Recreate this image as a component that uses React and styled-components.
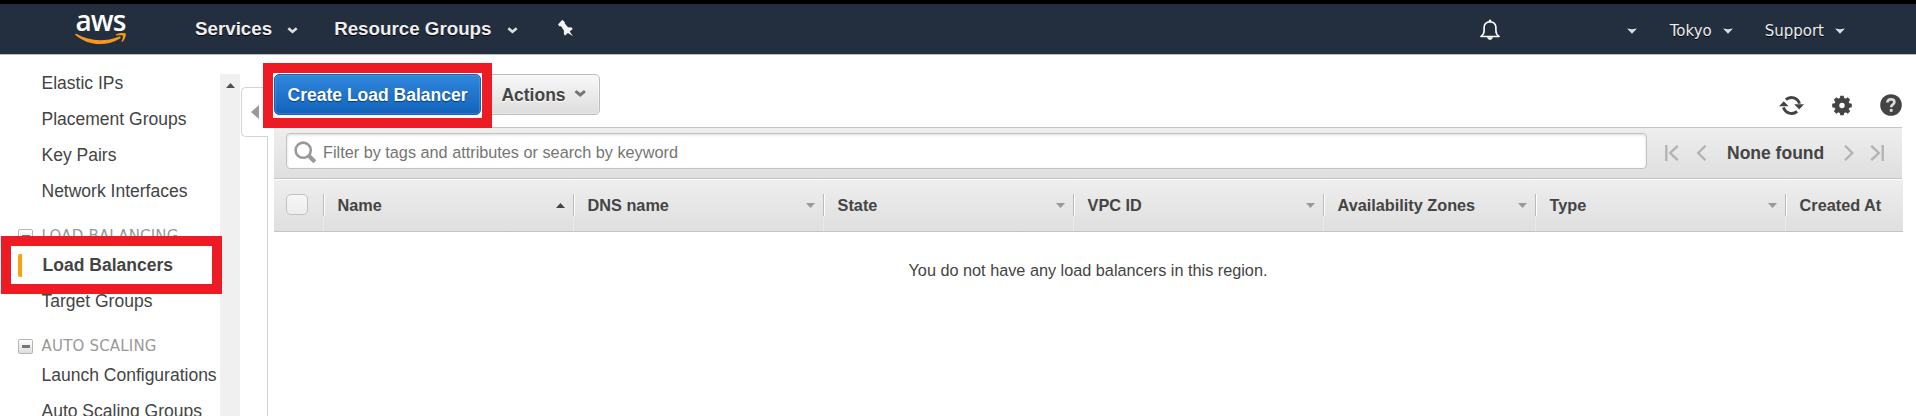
import React from "react";
import styled, { createGlobalStyle } from "styled-components";

const Global = createGlobalStyle`
  * { box-sizing: border-box; }
  body {
    margin: 0;
    overflow: hidden;
    background: #fff;
    color: #444;
    font-family: "Liberation Sans", Arial, sans-serif;
    font-size: 17.5px;
  }
`;

const Page = styled.div`
  width: 1916px;
  height: 416px;
  overflow: hidden;
  display: flex;
  flex-direction: column;
`;

const TopBar = styled.header`
  flex: none;
  height: 55px;
  display: flex;
  align-items: flex-start;
  background: #232f3e;
  border-top: 4px solid #000;
  border-bottom: 1px solid #b9bdc3;
  color: #eee;
`;

const Logo = styled.div`
  width: 51px;
  margin: 7px 66px 0 75px;
  display: flex;
  flex-direction: column;
  align-items: center;
  svg { display: block; margin-top: 2px; }
`;

const LogoText = styled.span`
  height: 20px;
  line-height: 18px;
  font-family: "Open Sans", sans-serif;
  font-size: 28px;
  font-weight: 600;
  letter-spacing: -0.9px;
  color: #fff;
`;

const MainMenu = styled.div`
  display: flex;
  align-items: center;
  gap: 15px;
  height: 50px;
  padding-bottom: 1px;
  margin-left: ${(p) => p.$left || 0}px;
  font-size: 18.75px;
  line-height: 24px;
  font-weight: bold;
  text-shadow: 0 1px 0 #000;
  svg { margin-top: 4px; }
`;

const PinSlot = styled.div`
  margin: 15px 0 0 39px;
  svg { display: block; }
`;

const AccountMenus = styled.div`
  margin-left: auto;
  display: flex;
  align-items: center;
  height: 50px;
  padding-right: 71px;
`;

const BellSlot = styled.div`
  margin-right: 127px;
  svg { display: block; }
`;

const AccountMenu = styled.div`
  display: flex;
  align-items: center;
  gap: 11px;
  height: 30px;
  padding-top: 4px;
  margin-left: ${(p) => p.$left || 0}px;
  font-family: "DejaVu Sans", Verdana, sans-serif;
  font-size: 15px;
  text-shadow: 0 1px 0 #000;
  svg { margin-bottom: 1px; }
`;

const Body = styled.div`
  flex: 1;
  display: flex;
  min-height: 0;
`;

const SideNav = styled.nav`
  width: 220px;
  padding-top: 10px;
`;

const NavLink = styled.div`
  position: relative;
  height: 36px;
  line-height: 36px;
  padding-left: ${(p) => (p.$active ? 42.6 : 41.5)}px;
  font-weight: ${(p) => (p.$active ? "bold" : "normal")};
  white-space: nowrap;
`;

const ActiveMark = styled.span`
  position: absolute;
  left: 18px;
  top: 7px;
  width: 4px;
  height: 23px;
  border-radius: 2px 0 0 2px;
  background: #ff9d13;
`;

const Highlight = styled.span`
  position: absolute;
  z-index: 3;
  left: ${(p) => p.$x}px;
  top: ${(p) => p.$y}px;
  width: ${(p) => p.$w}px;
  height: ${(p) => p.$h}px;
  border: 10px solid #ed1c24;
`;

const NavHeading = styled.div`
  display: flex;
  align-items: flex-start;
  height: 38px;
  padding: 17px 0 0 18px;
  gap: 8.6px;
  font-family: "DejaVu Sans", Verdana, sans-serif;
  font-size: 15px;
  line-height: 20px;
  letter-spacing: 0.18px;
  color: #999;
  white-space: nowrap;
`;

const Collapse = styled.span`
  flex: none;
  width: 15px;
  height: 15px;
  margin-top: 3px;
  display: flex;
  align-items: center;
  justify-content: center;
  border: 1px solid #b5b5b5;
  border-radius: 2px;
  background: linear-gradient(#fff, #ddd);
  &::before {
    content: "";
    width: 8px;
    height: 3px;
    background: #777;
  }
`;

const ScrollTrack = styled.div`
  width: 20px;
  margin-top: 19px;
  padding: 9px 0 0 6px;
  background: #f0f0f0;
  svg { display: block; }
`;

const Splitter = styled.div`
  width: 34px;
  padding: 32px 0 0 1px;
  display: flex;
  flex-direction: column;
`;

const SplitterTab = styled.div`
  flex: none;
  width: 27px;
  height: 50px;
  padding: 17px 0 0 9px;
  border: 1px solid #d5d5d5;
  border-right: 0;
  border-radius: 5px 0 0 5px;
  svg { display: block; }
`;

const SplitterLine = styled.div`
  flex: 1;
  width: 27px;
  margin-top: -1px;
  border-right: 1px solid #d5d5d5;
`;

const Content = styled.main`
  width: 1629px;
  display: flex;
  flex-direction: column;
`;

const Toolbar = styled.div`
  height: 72px;
  padding-top: 19px;
  display: flex;
  align-items: flex-start;
`;

const Button = styled.div`
  position: relative;
  display: flex;
  align-items: center;
  gap: 8px;
  height: 41px;
  padding: 1px 13px 0;
  margin-left: ${(p) => (p.$primary ? 0 : 5)}px;
  width: ${(p) => (p.$primary ? 207 : 114)}px;
  padding-left: ${(p) => (p.$primary ? 12.6 : 14.4)}px;
  border: 1px solid ${(p) => (p.$primary ? "#1a60ae" : "#bbb")};
  border-radius: 5px;
  background: ${(p) => (p.$primary ? "linear-gradient(#2f87dc, #1264bb)" : "linear-gradient(#f8f8f8, #ddd)")};
  box-shadow: inset 0 0 0 1px ${(p) => (p.$primary ? "rgba(100,170,240,.35)" : "rgba(255,255,255,.4)")};
  color: ${(p) => (p.$primary ? "#fff" : "#444")};
  text-shadow: ${(p) => (p.$primary ? "0 1px 1px #0a3c78" : "0 1px 0 #fff")};
  font-weight: bold;
  white-space: nowrap;
  svg { margin-bottom: 3px; }
`;

const ToolIcons = styled.div`
  margin: 20px 1px 0 auto;
  display: flex;
  align-items: center;
  gap: 28px;
  svg { display: block; }
`;

const FilterBar = styled.div`
  width: 1628px;
  height: 52px;
  display: flex;
  align-items: flex-start;
  padding: 5px 18px 0 12px;
  border-top: 1px solid #c4c4c4;
  border-bottom: 1px solid #c4c4c4;
  background: linear-gradient(#eee, #dfdfdf);
`;

const SearchBox = styled.div`
  flex: none;
  width: 1361px;
  height: 36px;
  display: flex;
  align-items: center;
  gap: 6px;
  padding: 2px 0 0 7px;
  border: 1px solid #c2c2c2;
  border-radius: 4px;
  background: #fff;
  box-shadow: inset 0 1px 3px rgba(0, 0, 0, 0.14);
  font-size: 16.25px;
  color: #757575;
`;

const Pager = styled.div`
  margin-left: 18px;
  height: 40px;
  display: flex;
  align-items: center;
  font-weight: bold;
  white-space: nowrap;
  svg { display: block; margin-bottom: 1px; }
`;

const PagerLabel = styled.span`
  width: 98px;
  margin: 0 19px 0 20px;
`;

const HeadRow = styled.div`
  height: 53px;
  display: flex;
  border-top: 1px solid #fff;
  border-bottom: 1px solid #c4c4c4;
  background: linear-gradient(#eee, #dfdfdf);
`;

const HeadCell = styled.div`
  position: relative;
  flex: none;
  width: ${(p) => p.$w}px;
  display: flex;
  align-items: center;
  justify-content: space-between;
  padding: 0 8px 1px 13.6px;
  border-left: ${(p) => (p.$first ? 0 : 1)}px solid #ebebeb;
  font-size: 16.25px;
  font-weight: bold;
  white-space: nowrap;
  &::before {
    content: "";
    display: ${(p) => (p.$first ? "none" : "block")};
    position: absolute;
    left: -1px;
    top: 14px;
    width: 2px;
    height: 22px;
    background: linear-gradient(90deg, #bbb 50%, #fff 50%);
  }
`;

const Checkbox = styled.span`
  width: 22px;
  height: 21px;
  margin: 0 0 2px -1.6px;
  border: 1px solid #c2c2c2;
  border-radius: 5px;
  background: linear-gradient(#f6f6f6, #eee);
`;

const Empty = styled.div`
  padding: 28px 0 0 634.5px;
  font-size: 16.25px;
  line-height: 20px;
  white-space: nowrap;
`;

const MenuChevron = ({ color = "#ddd", w = 11, h = 7 }) => (
  <svg width={w} height={h} viewBox="0 0 11 7">
    <path d="M1.3 1.3 5.5 4.8 9.7 1.3" fill="none" stroke={color} strokeWidth="2.6" />
  </svg>
);

const Caret = () => (
  <svg width="10" height="6" viewBox="0 0 10 6">
    <path d="M0 .5 5 1.3 10 .5 5 5.8Z" fill="#ddd" />
  </svg>
);

const SortArrow = ({ up }) => (
  <svg width="9" height="5" viewBox="0 0 9 5">
    <path d={up ? "M0 5 4.5 0 9 5Z" : "M0 0 9 0 4.5 5Z"} fill={up ? "#444" : "#999"} />
  </svg>
);

const columns = [
  { label: "Name", w: 250, up: true },
  { label: "DNS name", w: 250 },
  { label: "State", w: 250 },
  { label: "VPC ID", w: 250 },
  { label: "Availability Zones", w: 212 },
  { label: "Type", w: 250 },
];

const Smile = () => (
  <svg width="51" height="13" viewBox="0 0 51 13">
    <path d="M.2 1.2Q.5.3 1.8 1.1C14 8 29 9.3 43.8 3.7 45.3 3.1 46.3 4.5 45 5.5 31 14.2 12.5 12.5.7 2.2.2 1.8 0 1.5.2 1.2Z" fill="#f7981d" />
    <path d="M41.2 1.2C45 -.6 50.1-.2 50.7.7 51.2 2 49.9 6.6 47.4 8.8 46.8 9.2 46.3 8.9 46.6 8.2 47.5 6 48.4 3.3 47.8 2.7 47.2 2 44 2.3 41.8 2.4 40.9 2.5 40.4 1.7 41.2 1.2Z" fill="#f7981d" />
  </svg>
);

export default function App() {
  return (
    <Page>
      <Global />
      <TopBar>
        <Logo>
          <LogoText>aws</LogoText>
          <Smile />
        </Logo>
        <MainMenu $left={3}>Services <MenuChevron /></MainMenu>
        <MainMenu $left={36}>Resource Groups <MenuChevron /></MainMenu>
        <PinSlot>
          <svg width="17" height="18" viewBox="0 0 17 18">
            <path d="M1 5.4 5.3.8 8.1 3.4 7.6 4.3 11 8.3 14.7 8.6 15.7 10 12.7 12.5 16 17.2 10.9 13.9 8.2 16.6 6.9 15.3 6.9 11.6 4.1 7.2 2.4 7.3Z" fill="#f4f4f4" />
          </svg>
        </PinSlot>
        <AccountMenus>
          <BellSlot>
            <svg width="20" height="21" viewBox="0 0 20 21">
              <path d="M1 17.5H19Q15.9 15.4 15.9 11.5V8Q15.5 3.1 10 2.7 4.5 3.1 4.1 8V11.5Q4.1 15.4 1 17.5Z" fill="none" stroke="#fff" strokeWidth="1.6" strokeLinejoin="round" />
              <path d="M8.8 2.6V1Q10-.2 11.2 1V2.6ZM7 18.3H13Q12.4 21 10 21 7.6 21 7 18.3Z" fill="#fff" />
            </svg>
          </BellSlot>
          <AccountMenu><Caret /></AccountMenu>
          <AccountMenu $left={33}>Tokyo <Caret /></AccountMenu>
          <AccountMenu $left={32}>Support <Caret /></AccountMenu>
        </AccountMenus>
      </TopBar>
      <Body>
        <SideNav>
          <NavLink>Elastic IPs</NavLink>
          <NavLink>Placement Groups</NavLink>
          <NavLink>Key Pairs</NavLink>
          <NavLink>Network Interfaces</NavLink>
          <NavHeading><Collapse />LOAD BALANCING</NavHeading>
          <NavLink $active>
            <ActiveMark />
            Load Balancers
            <Highlight $x={1} $y={-11} $w={221} $h={58} />
          </NavLink>
          <NavLink>Target Groups</NavLink>
          <NavHeading><Collapse />AUTO SCALING</NavHeading>
          <NavLink>Launch Configurations</NavLink>
          <NavLink>Auto Scaling Groups</NavLink>
        </SideNav>
        <ScrollTrack>
          <svg width="9" height="5" viewBox="0 0 9 5"><path d="M0 5 4.5 0 9 5Z" fill="#505050" /></svg>
        </ScrollTrack>
        <Splitter>
          <SplitterTab>
            <svg width="8" height="14" viewBox="0 0 8 14"><path d="M8 0V14L0 7Z" fill="#999" /></svg>
          </SplitterTab>
          <SplitterLine />
        </Splitter>
        <Content>
          <Toolbar>
            <Button $primary>
              Create Load Balancer
              <Highlight $x={-12} $y={-12} $w={229} $h={65} />
            </Button>
            <Button>Actions <MenuChevron color="#777" w={13} h={9} /></Button>
            <ToolIcons>
              <svg width="25" height="21" viewBox="0 0 25 21">
                <path d="M6.9 4.6A8.4 8.4 0 0 1 20.5 8.6M18.1 16.4A8.4 8.4 0 0 1 4.5 12.4" fill="none" stroke="#444" strokeWidth="3" />
                <path d="M15.2 9.3H25L20.2 14.6ZM0 11.3H9.6L4.8 6.2Z" fill="#444" />
              </svg>
              <svg width="20" height="21" viewBox="-10 -10.5 20 21">
                <circle r="5.2" fill="none" stroke="#444" strokeWidth="5" />
                {[0, 45, 90, 135].map((a) => (
                  <path key={a} transform={`rotate(${a})`} d="M-2.4-6.5-1.7-9.8H1.7L2.4-6.5ZM-2.4 6.5-1.7 9.8H1.7L2.4 6.5Z" fill="#444" />
                ))}
              </svg>
              <svg width="22" height="22" viewBox="0 0 22 22">
                <circle cx="11" cy="11" r="10.8" fill="#444" />
                <path d="M7.4 8.5Q7.6 5.4 11 5.3 14.4 5.4 14.4 8 14.4 9.5 12.7 10.6 11.2 11.5 11.2 13.3" fill="none" stroke="#ddd" strokeWidth="2.6" />
                <rect x="9.8" y="15" width="2.8" height="2.8" fill="#ddd" />
              </svg>
            </ToolIcons>
          </Toolbar>
          <FilterBar>
            <SearchBox>
              <svg width="23" height="23" viewBox="0 0 23 23">
                <circle cx="9.2" cy="9.2" r="7.6" fill="none" stroke="#999" strokeWidth="2.6" />
                <path d="M14.8 14.8 20.8 20.8" stroke="#999" strokeWidth="4.2" />
              </svg>
              Filter by tags and attributes or search by keyword
            </SearchBox>
            <Pager>
              <svg width="42" height="16" viewBox="0 0 42 16">
                <path d="M1.3 0V16M12.7.8 5.2 8 12.7 15.2M40.5.8 33.2 8 40.5 15.2" fill="none" stroke="#b2b2b2" strokeWidth="2.3" />
              </svg>
              <PagerLabel>None found</PagerLabel>
              <svg width="40" height="16" viewBox="0 0 40 16">
                <path d="M1 .8 8.3 8 1 15.2M27.3.8 34.8 8 27.3 15.2M38.7 0V16" fill="none" stroke="#b2b2b2" strokeWidth="2.3" />
              </svg>
            </Pager>
          </FilterBar>
          <HeadRow>
            <HeadCell $first $w={49}><Checkbox /></HeadCell>
            {columns.map((c) => (
              <HeadCell key={c.label} $w={c.w}>{c.label}<SortArrow up={c.up} /></HeadCell>
            ))}
            <HeadCell $w={118}>Created At</HeadCell>
          </HeadRow>
          <Empty>You do not have any load balancers in this region.</Empty>
        </Content>
      </Body>
    </Page>
  );
}
